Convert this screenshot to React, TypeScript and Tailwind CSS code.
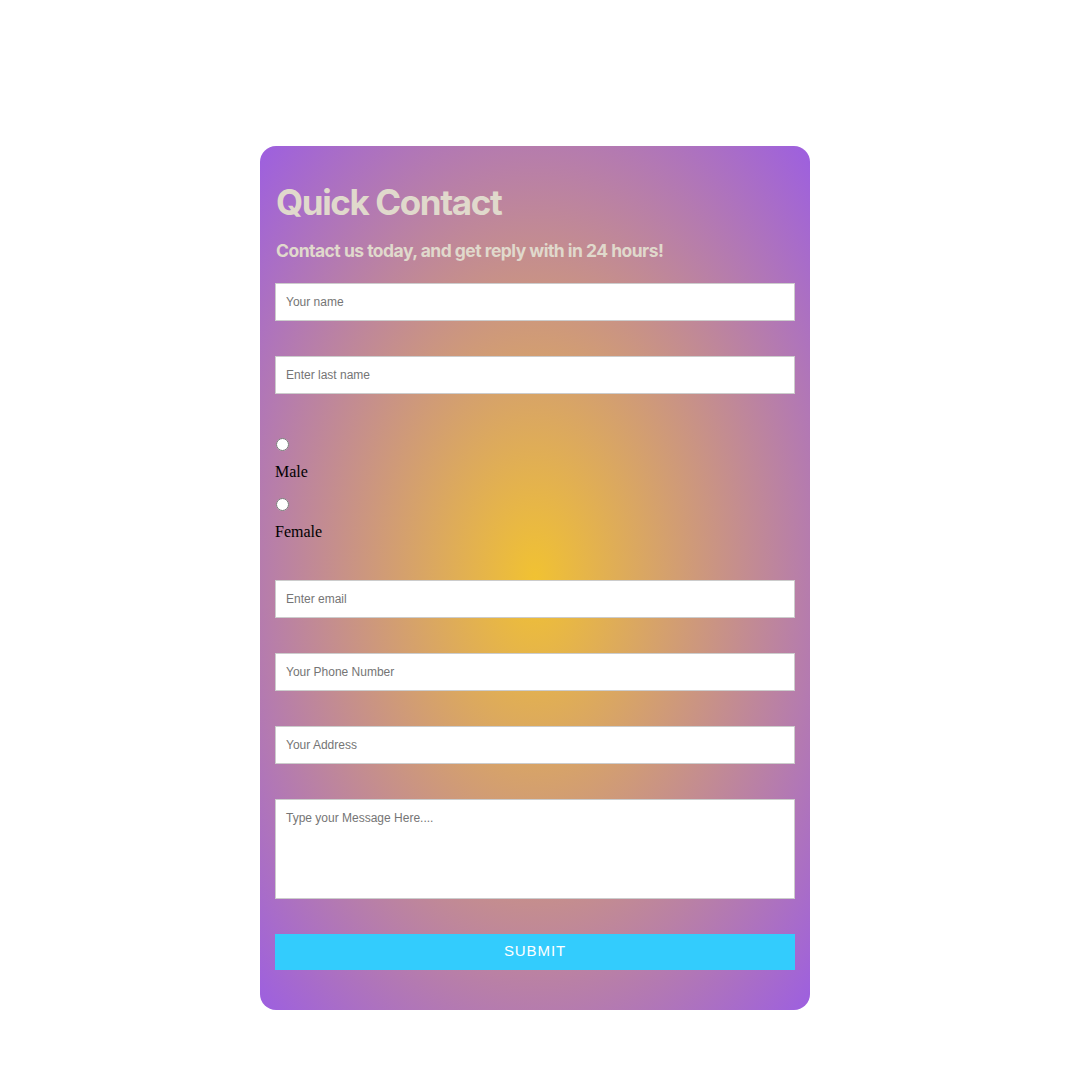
import React from "react";

const inputClass =
  "block w-full h-[38px] border border-[#cccccc] bg-white px-[10px] text-[12px] text-[#333] placeholder:text-[#757575] outline-none font-['Liberation_Sans',Arial,sans-serif]";

export default function App() {
  return (
    <div className="min-h-screen bg-white flex justify-center pr-px pt-[146px] pb-[59px]">
      <form
        className="w-[550px] rounded-2xl px-[15px] pt-[39px] pb-[40px] bg-[radial-gradient(#f1c232,#9d5fe0)]"
        onSubmit={(e) => e.preventDefault()}
      >
        <h1 className="text-[35px] leading-none font-bold tracking-[-0.04em] text-[#e0d9cc] font-['Inter',sans-serif] pl-px">
          Quick Contact
        </h1>
        <p className="mt-[22px] text-[17.5px] leading-none font-bold tracking-[-0.03em] text-[#e0d9cc] font-['Inter',sans-serif] pl-px">
          Contact us today, and get reply with in 24 hours!
        </p>

        <input className={`${inputClass} mt-[23px]`} placeholder="Your name" />
        <input className={`${inputClass} mt-[35px]`} placeholder="Enter last name" />

        <div className="mt-[44px] font-['Liberation_Serif','Times_New_Roman',serif] text-[16px] text-black">
          <input type="radio" name="gender" className="block m-0 ml-px w-[13px] h-[13px]" />
          <label className="block mt-[12px] leading-[18px]">Male</label>
          <input type="radio" name="gender" className="block m-0 ml-px mt-[17px] w-[13px] h-[13px]" />
          <label className="block mt-[12px] leading-[18px]">Female</label>
        </div>

        <input className={`${inputClass} mt-[39px]`} placeholder="Enter email" />
        <input className={`${inputClass} mt-[35px]`} placeholder="Your Phone Number" />
        <input className={`${inputClass} mt-[35px]`} placeholder="Your Address" />
        <textarea
          className="block w-full h-[100px] mt-[35px] border border-[#cccccc] bg-white px-[10px] pt-[9px] pb-[8px] text-[12px] text-[#333] placeholder:text-[#757575] outline-none resize-none font-['Liberation_Sans',Arial,sans-serif]"
          placeholder="Type your Message Here...."
        />
        <button
          type="submit"
          className="block w-full h-[36px] mt-[35px] bg-[#33ccfd] text-white text-[15px] tracking-[0.06em] font-['Liberation_Sans',Arial,sans-serif]"
        >
          SUBMIT
        </button>
      </form>
    </div>
  );
}
